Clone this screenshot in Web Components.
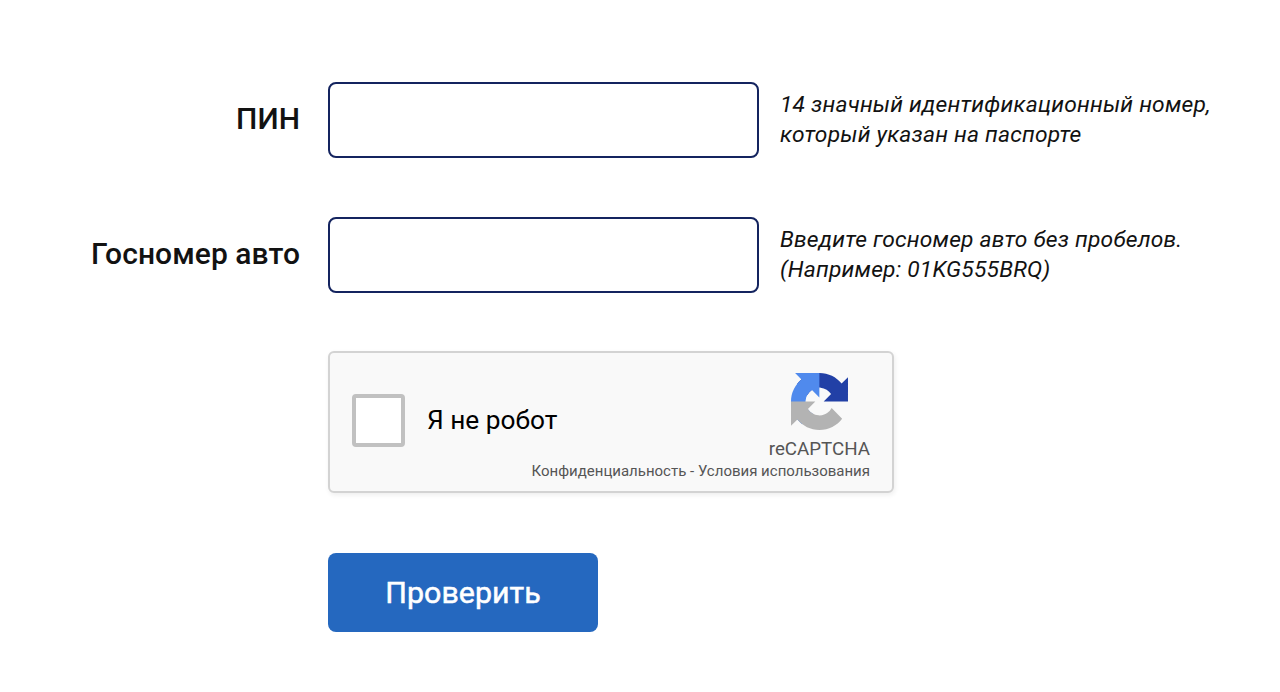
<!DOCTYPE html>
<html lang="ru">
<head>
<meta charset="utf-8">
<title>Проверка</title>
<style>
    body {
        margin: 0;
        background: #fff;
        color: #121212;
        font-family: Roboto, "Liberation Sans", sans-serif;
    }
</style>
</head>
<body>
<check-form>
    <form-row label="ПИН">14 значный идентификационный номер,<br>который указан на паспорте</form-row>
    <form-row label="Госномер авто">Введите госномер авто без пробелов.<br>(Например: 01KG555BRQ)</form-row>
    <captcha-box slot="footer"></captcha-box>
    <submit-button slot="footer">Проверить</submit-button>
</check-form>

<script>
class CheckForm extends HTMLElement{
    constructor(){
        super();
        this.attachShadow({mode:"open"}).innerHTML=`
        <style>
        :host {
            display: block;
            padding-top: 82px;
        }

        .rows {
            display: flex;
            flex-direction: column;
            gap: 59px;
        }

        .footer {
            display: flex;
            flex-direction: column;
            align-items: flex-start;
            gap: 60px;
            margin: 58px 0 0 328px;
        }
        </style>
        <div class="rows"><slot></slot></div>
        <div class="footer"><slot name="footer"></slot></div>`;
    }
}

class FormRow extends HTMLElement{
    constructor(){
        super();
        this.shadowDOM=this.attachShadow({mode:"open"});
    }

    connectedCallback(){
        this.shadowDOM.innerHTML=`
        <style>
        * {
            box-sizing: border-box;
        }

        :host {
            display: grid;
            grid-template-columns: 300px 431px 1fr;
            column-gap: 28px;
            height: 76px;
        }

        label {
            padding-top: 19px;
            font-size: 30px;
            line-height: 36px;
            font-weight: 500;
            letter-spacing: .06px;
            text-align: right;
            white-space: nowrap;
        }

        input {
            width: 431px;
            height: 76px;
            padding: 0 20px;
            border: 2px solid #14245f;
            border-radius: 8px;
            background: #fff;
            font: inherit;
            font-size: 30px;
            outline: none;
        }

        .hint {
            margin-left: -7px;
            padding-top: 8px;
            font-size: 22.8px;
            line-height: 30px;
            font-style: italic;
            letter-spacing: .2px;
            white-space: nowrap;
        }
        </style>
        <label for="field">${this.getAttribute("label")}</label>
        <input id="field" type="text">
        <div class="hint"><slot></slot></div>`;
    }
}

class CaptchaBox extends HTMLElement{
    constructor(){
        super();
        this.attachShadow({mode:"open"}).innerHTML=`
        <style>
        :host {
            box-sizing: border-box;
            display: flex;
            justify-content: space-between;
            width: 566px;
            height: 142px;
            padding: 0 22px;
            border: 2px solid #d3d3d3;
            border-radius: 6px;
            background: #f9f9f9;
            box-shadow: 1px 2px 5px rgba(0, 0, 0, .07);
        }

        .check {
            display: flex;
            align-items: center;
            gap: 22px;
            width: 170px;
            height: 134px;
            color: #000;
            font-size: 26.25px;
            white-space: nowrap;
        }

        .box {
            box-sizing: border-box;
            flex: none;
            width: 53px;
            height: 53px;
            border: 4px solid #c1c1c1;
            border-radius: 4px;
            background: #fff;
        }

        .brand {
            display: flex;
            flex-direction: column;
            align-items: flex-end;
            padding-top: 20px;
            color: #555;
            white-space: nowrap;
        }

        svg {
            width: 57px;
            height: 57px;
            margin-right: 22px;
        }

        .name {
            margin-top: 8px;
            font-size: 18.75px;
            line-height: 22px;
        }

        .links {
            margin-top: 1px;
            font-size: 15px;
            line-height: 20px;
        }
        </style>
        <div class="check"><span class="box"></span><span>Я не робот</span></div>
        <div class="brand">
            <svg viewBox="0 0 64 64">
                <path fill="#2240a6" d="M64 31.955l-.033-1.37V4.687l-7.16 7.16C50.948 4.674 42.033.093 32.05.093c-10.4 0-19.622 4.96-25.458 12.64l11.736 11.86a15.55 15.55 0 0 1 4.754-5.334c2.05-1.6 4.952-2.906 8.968-2.906.485 0 .86.057 1.135.163 4.976.393 9.288 3.14 11.828 7.124l-8.307 8.307L64 31.953"/>
                <path fill="#508aed" d="M31.862.094l-1.37.033H4.594l7.16 7.16C4.58 13.147 0 22.06 0 32.046c0 10.4 4.96 19.622 12.64 25.458L24.5 45.768a15.55 15.55 0 0 1-5.334-4.754c-1.6-2.05-2.906-4.952-2.906-8.968 0-.485.057-.86.163-1.135.393-4.976 3.14-9.288 7.124-11.828l8.307 8.307L31.86.095"/>
                <path fill="#b3b3b3" d="M.001 32.045l.033 1.37v25.898l7.16-7.16c5.86 7.173 14.774 11.754 24.76 11.754 10.4 0 19.622-4.96 25.458-12.64l-11.736-11.86a15.55 15.55 0 0 1-4.754 5.334c-2.05 1.6-4.952 2.906-8.968 2.906-.485 0-.86-.057-1.135-.163-4.976-.393-9.288-3.14-11.828-7.124l8.307-8.307L0 32.05"/>
            </svg>
            <div class="name">reCAPTCHA</div>
            <div class="links">Конфиденциальность - Условия использования</div>
        </div>`;
    }
}

class SubmitButton extends HTMLElement{
    constructor(){
        super();
        this.attachShadow({mode:"open"}).innerHTML=`
        <style>
        :host {
            display: block;
        }

        button {
            display: block;
            width: 270px;
            height: 79px;
            padding: 0;
            border: 0;
            border-radius: 8px;
            background: #2568bf;
            color: #fff;
            font-family: inherit;
            font-size: 30.4px;
            font-weight: 400;
            -webkit-text-stroke: .5px #fff;
        }
        </style>
        <button type="button"><slot></slot></button>`;
    }
}

customElements.define("check-form", CheckForm);
customElements.define("form-row", FormRow);
customElements.define("captcha-box", CaptchaBox);
customElements.define("submit-button", SubmitButton);
</script>
</body>
</html>
